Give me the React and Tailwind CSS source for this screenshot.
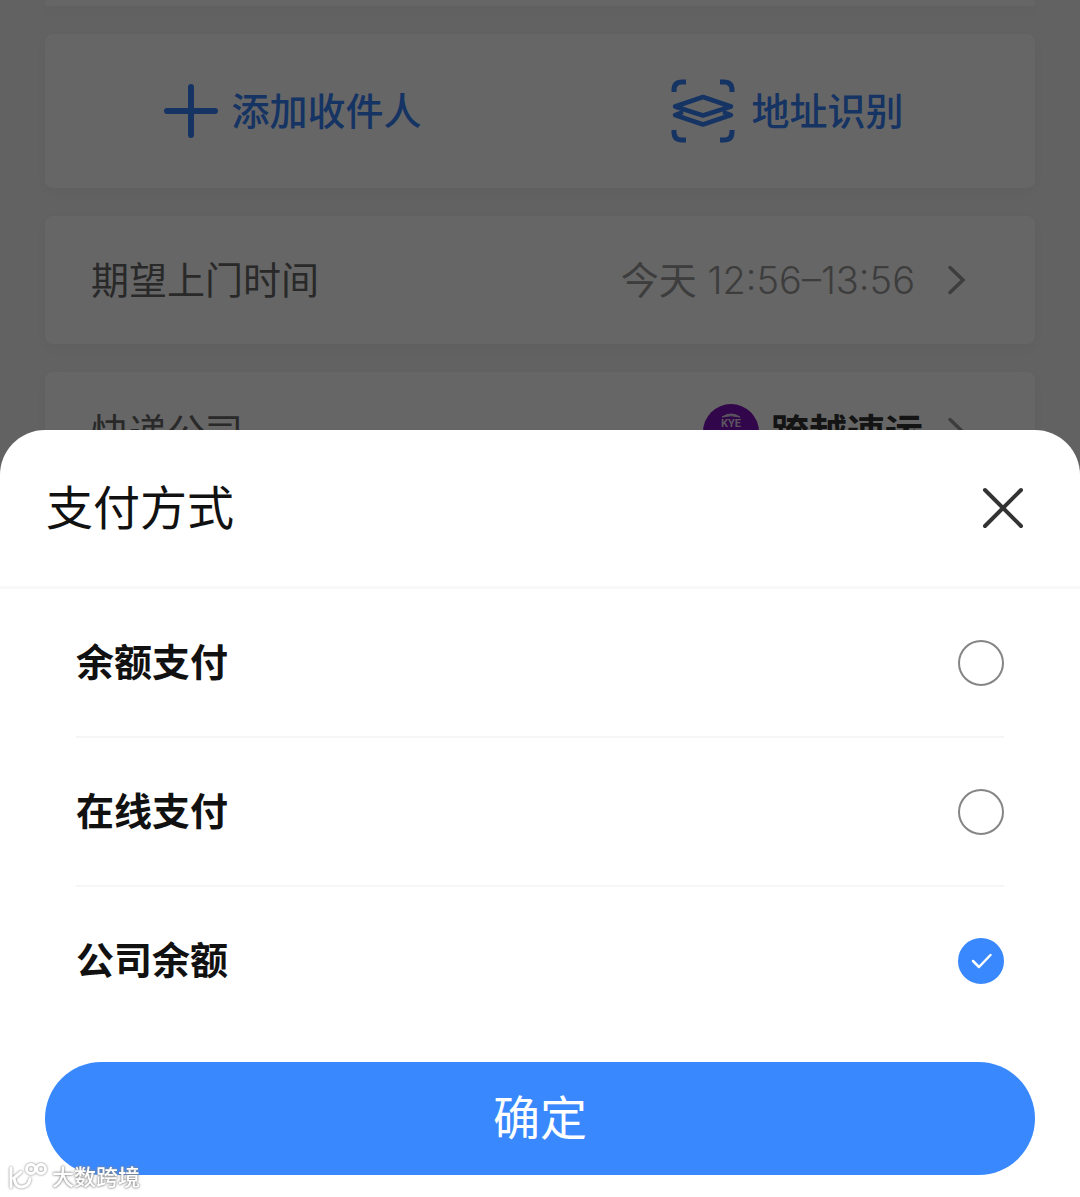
import { useState } from "react";

const OPTIONS = [
  { id: "balance", label: "余额支付" },
  { id: "online", label: "在线支付" },
  { id: "company", label: "公司余额" },
];

function PlusIcon() {
  return (
    <svg className="size-14 shrink-0" viewBox="0 0 56 56" fill="none" stroke="currentColor" strokeWidth="6" strokeLinecap="round" aria-hidden="true">
      <path d="M28 4V52M4 28H52" />
    </svg>
  );
}

function ScanLayersIcon() {
  return (
    <svg className="size-16 shrink-0" viewBox="0 0 64 64" fill="none" stroke="currentColor" strokeWidth="5" strokeLinejoin="round" aria-hidden="true">
      <path d="M3 13V11Q3 3 11 3H15M49 3H53Q61 3 61 11V13M61 51V53Q61 61 53 61H49M15 61H11Q3 61 3 53V51" />
      <path strokeWidth="4.5" d="M4 27.500L32 18L60 27.500L32 36.500Z" />
      <path strokeWidth="4.5" d="M12 33L4 36L32 45.500L60 36L52 33" />
    </svg>
  );
}

function ChevronIcon() {
  return (
    <svg className="h-8 w-5 shrink-0 text-[#999]" viewBox="0 0 20 32" fill="none" stroke="currentColor" strokeWidth="3.5" strokeLinecap="round" aria-hidden="true">
      <path d="M3 3.5L16 16L3 28.5" />
    </svg>
  );
}

function CourierLogo() {
  return (
    <svg className="size-14 shrink-0" viewBox="0 0 56 56" aria-hidden="true">
      <circle cx="28" cy="28" r="28" fill="#7a0fb8" />
      <path d="M19 13Q28 7 37 13Q28 10.500 19 13Z" fill="#e5d5ee" stroke="#e5d5ee" strokeWidth="1" />
      <text x="28" y="23" textAnchor="middle" fontSize="11" fontWeight="700" fontFamily="Roboto, sans-serif" fill="#e5d5ee">KYE</text>
      <path d="M20 29H36M20 33H36" stroke="#e5d5ee" strokeWidth="2" />
    </svg>
  );
}

function Card({ children, className }) {
  return <section className={"rounded-lg bg-white shadow-[0_4px_12px_rgba(0,0,0,0.03)] " + className}>{children}</section>;
}

function OrderPage() {
  return (
    <main className="flex h-screen flex-col gap-7 overflow-hidden bg-[#f4f4f4] px-[45px] text-[38px] leading-[56px] text-[#666]">
      <Card className="h-1.5 shrink-0" />
      <Card className="grid shrink-0 grid-cols-2 py-[49px] font-medium text-[#3680f8]">
        <button type="button" className="flex items-center justify-center gap-3">
          <PlusIcon />
          添加收件人
        </button>
        <button type="button" className="flex h-14 items-center justify-center gap-4">
          <ScanLayersIcon />
          地址识别
        </button>
      </Card>
      <Card className="shrink-0">
        <button type="button" className="flex w-full items-center py-9 pl-[46px] pr-[68px]">
          <span className="mr-auto">期望上门时间</span>
          <span className="mr-8 text-[#999]">
            今天 <span className="font-light">12:56–13:56</span>
          </span>
          <ChevronIcon />
        </button>
      </Card>
      <Card className="shrink-0">
        <button type="button" className="flex w-full items-center py-8 pl-[46px] pr-[68px]">
          <span className="mr-auto">快递公司</span>
          <CourierLogo />
          <span className="ml-3 mr-6 font-bold text-[#333]">跨越速运</span>
          <ChevronIcon />
        </button>
      </Card>
    </main>
  );
}

function PaymentOption({ option, checked, onSelect }) {
  return (
    <label className="flex h-[149px] cursor-pointer items-center justify-between border-b-2 border-[#f6f6f6] text-[38px] font-bold text-[#111] last:border-transparent">
      {option.label}
      <span className="grid size-[46px] place-items-center">
        <input
          type="radio"
          name="payment"
          value={option.id}
          checked={checked}
          onChange={onSelect}
          className="col-start-1 row-start-1 size-[46px] appearance-none rounded-full border-2 border-[#858585] bg-white checked:border-[#3988fe] checked:bg-[#3988fe]"
        />
        {checked && (
          <svg className="pointer-events-none z-10 col-start-1 row-start-1 size-6" viewBox="0 0 24 24" fill="none" stroke="white" strokeWidth="2.5" strokeLinecap="round" strokeLinejoin="round" aria-hidden="true">
            <path d="M4 12L10 18L21.500 6" />
          </svg>
        )}
      </span>
    </label>
  );
}

function Watermark() {
  return (
    <div className="pointer-events-none absolute bottom-1 left-2 flex items-center gap-1 text-[22px] leading-[30px] font-medium text-white [text-shadow:0_0_2px_#777,0_0_3px_#999]">
      <svg className="h-8 w-10 drop-shadow-[0_0_1px_#777]" viewBox="0 0 40 32" fill="none" stroke="white" strokeWidth="3" strokeLinecap="round" strokeLinejoin="round" aria-hidden="true">
        <path d="M3 7V26M13 11L6 17Q7 26 14 26Q21 25 22 18" />
        <circle cx="23" cy="8" r="4.500" />
        <circle cx="33" cy="8" r="4.500" />
      </svg>
      大数跨境
    </div>
  );
}

export default function App() {
  const [selected, setSelected] = useState("company");
  return (
    <div className="font-['Inter','Noto_Sans_CJK_SC',sans-serif]">
      <OrderPage />
      <div className="fixed inset-0 flex items-end bg-black/60">
        <form role="dialog" aria-labelledby="payment-title" className="relative w-full rounded-t-[45px] bg-white pb-[22px]" onSubmit={(e) => e.preventDefault()}>
          <header className="flex h-[159px] items-center justify-between border-b-3 border-[#f8f8f8] pl-[46px] pr-[53px]">
            <h2 id="payment-title" className="text-[47px] leading-[64px] text-[#111]">支付方式</h2>
            <button type="button" aria-label="关闭" className="text-[#333]">
              <svg className="size-12" viewBox="0 0 48 48" fill="none" stroke="currentColor" strokeWidth="4" strokeLinecap="round" aria-hidden="true">
                <path d="M6 6L42 42M42 6L6 42" />
              </svg>
            </button>
          </header>
          <div className="px-[76px]">
            {OPTIONS.map((option) => (
              <PaymentOption key={option.id} option={option} checked={selected === option.id} onSelect={() => setSelected(option.id)} />
            ))}
          </div>
          <div className="px-[45px] pt-[26px]">
            <button type="submit" className="h-[113px] w-full rounded-full bg-[#3988fe] text-[47px] text-white">确定</button>
          </div>
          <Watermark />
        </form>
      </div>
    </div>
  );
}
